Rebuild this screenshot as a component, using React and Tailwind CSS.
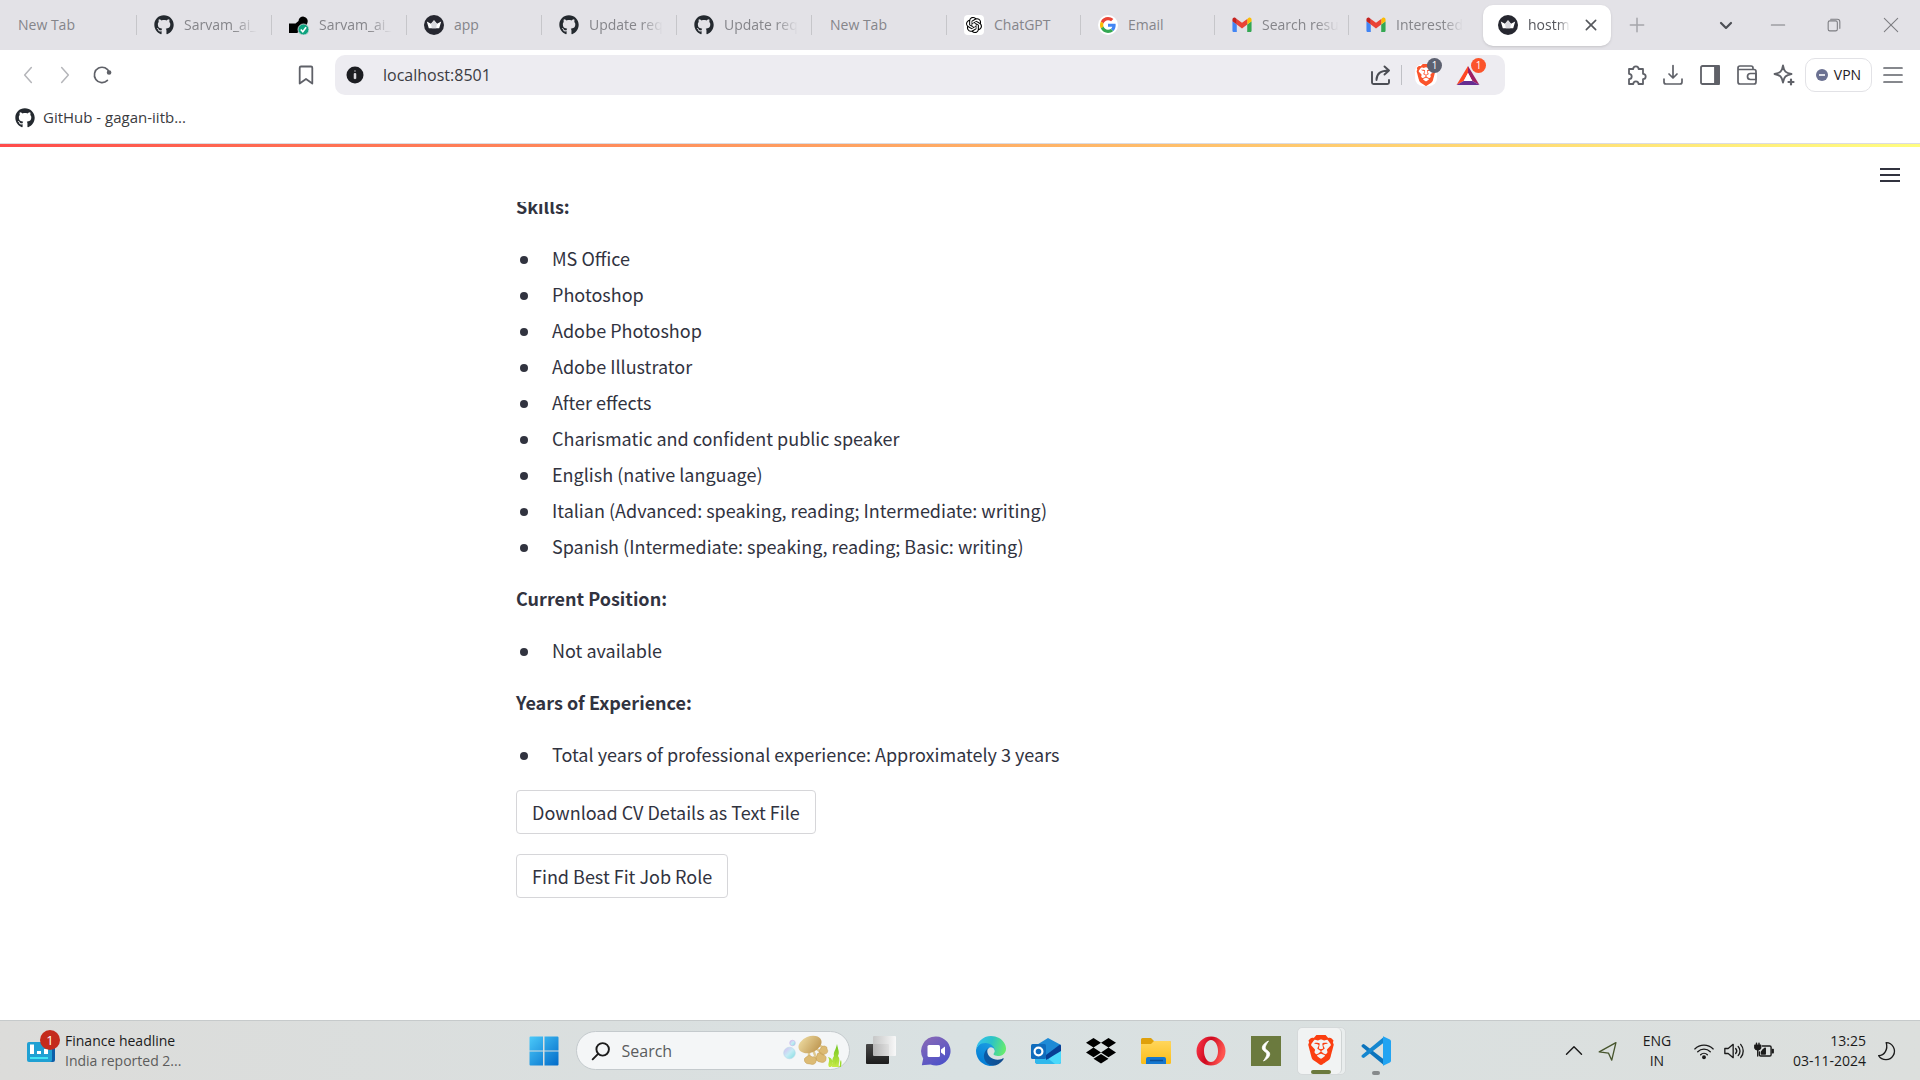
import React from "react";
import { SiBrave, SiOpenai } from "react-icons/si";
import { FaGithub } from "react-icons/fa";

const GitHub = () => <FaGithub className="size-5 shrink-0 text-[#24292f]" />;

const Crown = () => (
  <svg viewBox="0 0 20 20" className="size-5 shrink-0">
    <circle cx="10" cy="10" r="10" fill="#262730" />
    <path d="M2.8 6.6 7 8.7l3-3.4 3 3.4 4.2-2.1-2 6.7H4.8z" fill="#fff" />
    <path d="M7 8.7 10 5.3l3 3.4-.8 4.6H7.8z" fill="#d9d9de" />
  </svg>
);

const Colab = () => (
  <svg viewBox="0 0 20 20" className="size-5 shrink-0">
    <path d="M0 8.500h6.500L9.500 6a4.600 4.600 0 1 1 9 1.500L17 12 8 18H0z" fill="#000" />
    <circle cx="14.500" cy="14.500" r="5.500" fill="#0fa37f" stroke="#e3e2e7" strokeWidth="0.800" />
    <path d="m11.800 14.400 2 2.300 3.300-4.500" fill="none" stroke="#fff" strokeWidth="1.600" />
  </svg>
);

const ChatGpt = () => (
  <span className="flex size-5 shrink-0 items-center justify-center rounded bg-white">
    <SiOpenai className="size-4 text-black" />
  </span>
);

const Google = () => (
  <span className="flex size-5 shrink-0 items-center justify-center rounded-full bg-white">
    <svg viewBox="0 0 48 48" className="size-4">
      <path fill="#ea4335" d="M24 9.500c3.540 0 6.710 1.220 9.210 3.600l6.850-6.850C35.900 2.380 30.470 0 24 0 14.620 0 6.510 5.380 2.560 13.220l7.980 6.190C12.430 13.720 17.740 9.500 24 9.500z" />
      <path fill="#4285f4" d="M46.980 24.550c0-1.570-.15-3.090-.38-4.550H24v9.020h12.940c-.58 2.960-2.260 5.480-4.780 7.180l7.730 6c4.510-4.180 7.090-10.360 7.090-17.650z" />
      <path fill="#fbbc05" d="M10.530 28.590c-.48-1.450-.76-2.990-.76-4.590s.27-3.140.76-4.590l-7.980-6.190C.92 16.460 0 20.120 0 24s.92 7.540 2.560 10.780l7.970-6.190z" />
      <path fill="#34a853" d="M24 48c6.480 0 11.930-2.130 15.890-5.810l-7.730-6c-2.150 1.450-4.920 2.300-8.160 2.300-6.260 0-11.570-4.220-13.470-9.910l-7.980 6.190C6.510 42.620 14.620 48 24 48z" />
    </svg>
  </span>
);

const Gmail = () => (
  <svg viewBox="50 37 92 78" className="size-5 shrink-0">
    <path fill="#4285f4" d="M58 108h14V74L52 59v43c0 3.320 2.690 6 6 6" />
    <path fill="#34a853" d="M120 108h14c3.320 0 6-2.690 6-6V59l-20 15" />
    <path fill="#fbbc04" d="M120 48v26l20-15v-8c0-7.420-8.470-11.650-14.400-7.200" />
    <path fill="#ea4335" d="M72 74V48l24 18 24-18v26L96 92" />
    <path fill="#c5221f" d="M52 51v8l20 15V48l-5.600-4.200C60.470 39.350 52 43.580 52 51" />
  </svg>
);

const Line = ({ size = "size-6", children, w = 1.6 }) => (
  <svg viewBox="0 0 24 24" className={size} fill="none" stroke="currentColor" strokeWidth={w} strokeLinecap="round" strokeLinejoin="round">
    {children}
  </svg>
);

const tabs = [
  ["New Tab", null, "w-[137px]"],
  ["Sarvam_ai_", GitHub, "w-[135px]"],
  ["Sarvam_ai_", Colab, "w-[135px]"],
  ["app", Crown, "w-[135px]"],
  ["Update req", GitHub, "w-[135px]"],
  ["Update req", GitHub, "w-[135px]"],
  ["New Tab", null, "w-[135px]"],
  ["ChatGPT", ChatGpt, "w-[134px]"],
  ["Email", Google, "w-[134px]"],
  ["Search resu", Gmail, "w-[134px]"],
  ["Interested", Gmail, "w-[134px]"],
];

const fade = "whitespace-nowrap mask-r-from-70% mask-r-to-100%";

function TabStrip() {
  return (
    <div className="flex h-[50px] shrink-0 items-center bg-[#e3e2e7]">
      <div role="tablist" className="flex min-w-0 items-center">
        {tabs.map(([label, Icon, width], i) => (
          <button
            key={i}
            role="tab"
            className={
              "flex h-5 min-w-0 shrink items-center gap-[10px] border-r pr-2 text-left text-sm text-[#85858a] " +
              width +
              (Icon ? " pl-[17px] " : " pl-[18px] ") +
              (i === tabs.length - 1 ? "border-transparent" : "border-[#c6c6ca]")
            }
          >
            {Icon && <Icon />}
            <span className={label.length > 9 ? fade : "whitespace-nowrap"}>{label}</span>
          </button>
        ))}
        <div className="flex h-[41px] w-[128px] min-w-0 shrink items-center gap-[10px] rounded-[10px] bg-white pl-[15px] pr-3 shadow-sm">
          <Crown />
          <button role="tab" aria-selected="true" className={fade + " text-left text-sm text-[#55565c]"}>
            hostm
          </button>
          <button aria-label="Close tab" className="ml-auto text-[#55575c]">
            <Line size="size-4" w={2.4}>
              <path d="M5 5l14 14M19 5 5 19" />
            </Line>
          </button>
        </div>
      </div>
      <button aria-label="New tab" className="ml-4 text-[#a5a5aa]">
        <Line size="size-5" w={1.8}><path d="M12 4v16M4 12h16" /></Line>
      </button>
      <div className="ml-auto flex items-center text-[#7d7d82]">
        <button aria-label="Search tabs" className="flex w-12 justify-center text-[#4d4f55]">
          <Line size="size-5" w={2.6}><path d="m6 9.500 6 6 6-6" /></Line>
        </button>
        <button aria-label="Minimize" className="flex w-14 justify-center">
          <Line size="size-5" w={1.3}><path d="M4 12h16" /></Line>
        </button>
        <button aria-label="Restore" className="flex w-14 justify-center">
          <Line size="size-5" w={1.3}>
            <rect x="5" y="7" width="11" height="12" rx="2" />
            <path d="M8 5h8a3 3 0 0 1 3 3v8" />
          </Line>
        </button>
        <button aria-label="Close window" className="flex w-[58px] justify-center">
          <Line size="size-5" w={1.3}><path d="m4 4 16 16M20 4 4 20" /></Line>
        </button>
      </div>
    </div>
  );
}

const ToolButton = ({ label, className = "text-[#5f6168]", children }) => (
  <button aria-label={label} className={"flex h-10 w-[37px] shrink-0 items-center justify-center " + className}>
    {children}
  </button>
);

function Toolbar() {
  return (
    <div className="flex h-[50px] shrink-0 items-center bg-white">
      <div className="flex w-[335px] shrink-0 items-center pl-[9px] pr-[11px]">
        <ToolButton label="Back" className="text-[#b5b6ba]">
          <Line size="size-5" w={1.8}><path d="M16 3 8 12l8 9" /></Line>
        </ToolButton>
        <ToolButton label="Forward" className="text-[#b5b6ba]">
          <Line size="size-5" w={1.8}><path d="m8 3 8 9-8 9" /></Line>
        </ToolButton>
        <ToolButton label="Reload">
          <Line size="size-5" w={2}>
            <path d="M18.500 18.500A9.200 9.200 0 1 1 20.800 9" />
            <circle cx="20.500" cy="9" r="1.800" fill="currentColor" />
          </Line>
        </ToolButton>
        <span className="flex-1" />
        <ToolButton label="Bookmark this page">
          <Line w={1.8}><path d="M7 3.500h10a1.300 1.300 0 0 1 1.300 1.300v15.700L12 16l-6.300 4.500V4.800A1.300 1.300 0 0 1 7 3.500z" /></Line>
        </ToolButton>
      </div>
      <div className="flex h-10 min-w-0 flex-1 items-center rounded-[10px] bg-[#edecf1] pl-[11px] pr-[19px]">
        <svg viewBox="0 0 18 18" className="size-[18px] shrink-0">
          <circle cx="9" cy="9" r="8.500" fill="#1c1d22" />
          <path d="M8.200 5h1.600M8.200 7.600v5h1.600v-5z" stroke="#edecf1" strokeWidth="0.800" fill="#edecf1" />
        </svg>
        <input aria-label="Address" defaultValue="localhost:8501" className="ml-[19px] min-w-0 flex-1 bg-transparent text-base text-[#3b3b42] outline-none" />
        <button aria-label="Share" className="text-[#4b4d54]">
          <Line w={1.9}>
            <path d="M3 9v10.500a1.500 1.500 0 0 0 1.500 1.500h14a1.500 1.500 0 0 0 1.500-1.500V17M7.500 17c0-6 4-9.500 12.500-9.500M15.500 3.500l4.500 4-4.500 4" />
          </Line>
        </button>
        <span className="mx-2 h-5 w-px bg-[#bfc0c5]" />
        <button aria-label="Brave Shields" className="relative flex size-8 items-center justify-center">
          <SiBrave className="size-[22px] rounded-lg bg-white text-[#fb542b]" />
          <span className="absolute -top-px right-0 flex size-[15px] items-center justify-center rounded-full bg-[#5d6170] text-[10px] text-white">1</span>
        </button>
        <button aria-label="Brave Rewards" className="relative ml-2 flex h-8 w-9 items-center justify-center">
          <svg viewBox="0 0 24 22" className="h-[21px] w-6">
            <path d="M12 1 0 21l7.500-4.300L12 8.500z" fill="#ff4724" />
            <path d="M12 1l12 20-7.500-4.300L12 8.500z" fill="#9e1f63" />
            <path d="M0 21h24l-7.500-4.300h-9z" fill="#662d91" />
            <path d="M12 8.500 7.500 16.700h9z" fill="#fff" />
          </svg>
          <span className="absolute -top-px right-0 flex size-[15px] items-center justify-center rounded-full bg-[#fb542b] text-[10px] text-white">1</span>
        </button>
      </div>
      <div className="ml-auto flex w-[415px] shrink-0 items-center justify-end pr-[9px]">
        <ToolButton label="Extensions">
          <Line w={1.8}><path d="M5 6h4.200a2.700 2.700 0 0 1 5.400 0H19v4.800a2.700 2.700 0 0 1 0 5.400V21h-4.500a2.600 2.600 0 0 0-5.200 0H5v-4.800a2.700 2.700 0 0 0 0-5.400z" /></Line>
        </ToolButton>
        <ToolButton label="Downloads">
          <Line w={1.7}><path d="M12 2.500v12M8 11l4 4 4-4M3 16v3a2 2 0 0 0 2 2h14a2 2 0 0 0 2-2v-3" /></Line>
        </ToolButton>
        <ToolButton label="Sidebar">
          <Line w={1.8}>
            <rect x="3" y="3" width="18" height="18" rx="1.500" />
            <path d="M17 3h4v18h-4z" fill="currentColor" />
          </Line>
        </ToolButton>
        <ToolButton label="Wallet">
          <Line w={1.7}>
            <path d="M18 6.500V5a2 2 0 0 0-2-2H5a2 2 0 0 0-2 2v14a2 2 0 0 0 2 2h14a2 2 0 0 0 2-2V8.500a2 2 0 0 0-2-2H3.500" />
            <path d="M21 10.500h-5.500a3 3 0 0 0 0 6H21z" />
          </Line>
        </ToolButton>
        <ToolButton label="Leo AI">
          <Line w={1.8}>
            <path d="M11 2.500c1 6 2.700 7.400 8.500 8.500-5.800 1.100-7.500 2.700-8.500 8.500-1-5.800-2.700-7.400-8.500-8.500 5.800-1.100 7.500-2.500 8.500-8.500z" />
            <path d="M19 16.500v5M16.500 19h5" strokeWidth="2.200" />
          </Line>
        </ToolButton>
        <button className="ml-[3px] mr-[2px] flex h-[34px] w-[67px] items-center justify-center gap-[6px] rounded-[10px] border border-[#e2e2e6] text-sm text-[#1f2024]">
          <svg viewBox="0 0 12 12" className="size-3">
            <circle cx="6" cy="6" r="6" fill="#6b7191" />
            <path d="M3 6h6" stroke="#fff" strokeWidth="1.600" />
          </svg>
          VPN
        </button>
        <ToolButton label="Menu">
          <Line w={1.7}><path d="M3 5h18M3 12h18M3 19h18" /></Line>
        </ToolButton>
      </div>
    </div>
  );
}

const skills = [
  "MS Office",
  "Photoshop",
  "Adobe Photoshop",
  "Adobe Illustrator",
  "After effects",
  "Charismatic and confident public speaker",
  "English (native language)",
  "Italian (Advanced: speaking, reading; Intermediate: writing)",
  "Spanish (Intermediate: speaking, reading; Basic: writing)",
];

const Section = ({ title, items }) => (
  <section className="flex flex-col gap-5">
    <h2 className="font-bold leading-7">{title}</h2>
    <ul>
      {items.map((t) => (
        <li key={t} className="flex items-center gap-6 py-1 pl-1 leading-7">
          <span className="mt-[3px] size-2 rounded-full bg-[#31333f]" />
          {t}
        </li>
      ))}
    </ul>
  </section>
);

const AppButton = ({ children }) => (
  <button className="h-11 rounded-[4px] border border-[#d6d6d9] bg-white px-[15px]">{children}</button>
);

function Page() {
  return (
    <div className="flex min-h-0 flex-1 flex-col border-t border-[#dcdce2] bg-white">
      <div className="h-[3px] shrink-0 bg-linear-to-r from-[#ff4b4b] to-[#fffd80]" />
      <header className="flex h-[55px] shrink-0 items-center justify-end pr-5">
        <button aria-label="Main menu" className="flex w-5 flex-col gap-1">
          <span className="h-[2px] bg-[#31333f]" />
          <span className="h-[2px] bg-[#31333f]" />
          <span className="h-[2px] bg-[#31333f]" />
        </button>
      </header>
      <main className="min-h-0 flex-1 overflow-hidden">
        <div className="mx-auto -mt-[10px] flex max-w-[888px] flex-col gap-[18px] font-['Noto_Sans_CJK_SC','Noto_Sans',sans-serif] text-[18px] text-[#31333f]">
          <div className="flex flex-col gap-5">
            <Section title="Skills:" items={skills} />
            <Section title="Current Position:" items={["Not available"]} />
            <Section title="Years of Experience:" items={["Total years of professional experience: Approximately 3 years"]} />
          </div>
          <div className="flex flex-col items-start gap-5">
            <AppButton>Download CV Details as Text File</AppButton>
            <AppButton>Find Best Fit Job Role</AppButton>
          </div>
        </div>
      </main>
    </div>
  );
}

const Svg = ({ children, box = "0 0 30 30" }) => (
  <svg viewBox={box} className="size-[30px]">{children}</svg>
);

function AppIcons() {
  const apps = [
    ["Task view", <Svg>
      <defs>
        <linearGradient id="tvd" x2="0" y2="1"><stop stopColor="#484848" /><stop offset="1" stopColor="#1c1c1c" /></linearGradient>
        <linearGradient id="tvl"><stop stopColor="#c4c4c4" stopOpacity="0.900" /><stop offset="1" stopColor="#fafafa" stopOpacity="0.950" /></linearGradient>
      </defs>
      <rect x="0" y="8" width="23" height="20" rx="1" fill="url(#tvd)" />
      <rect x="7" y="0" width="23" height="20" rx="1" fill="url(#tvl)" />
    </Svg>],
    ["Chat", <Svg>
      <defs><linearGradient id="tm" x2="0.600" y2="1"><stop stopColor="#8d6bb5" /><stop offset="1" stopColor="#4f52c8" /></linearGradient></defs>
      <path d="M15 0.500a14.500 14.500 0 1 1-5.500 27.900L0.800 29.300l1.400-6.900A14.500 14.500 0 0 1 15 .5z" fill="url(#tm)" />
      <rect x="6.500" y="9" width="12.500" height="12" rx="1.500" fill="#fff" />
      <path d="m20 13.500 4-3v9l-4-3z" fill="#fff" />
    </Svg>],
    ["Edge", <Svg box="0 0 256 256">
      <defs>
        <linearGradient id="e1" x1="0.200" x2="1"><stop stopColor="#0c59a4" /><stop offset="1" stopColor="#114a8b" /></linearGradient>
        <linearGradient id="e2" x1="0.600" y1="0" x2="0.200" y2="1"><stop stopColor="#1b9de2" /><stop offset="1" stopColor="#0078d4" /></linearGradient>
        <linearGradient id="e3" x1="0" y1="0.300" x2="1" y2="0.500"><stop stopColor="#35c1f1" /><stop offset="0.500" stopColor="#2cc3c6" /><stop offset="1" stopColor="#66eb6e" /></linearGradient>
      </defs>
      <g transform="translate(-4.630 -4.920)">
        <path fill="url(#e1)" d="M235.680,195.460a93.730,93.730,0,0,1-10.540,4.710,101.870,101.870,0,0,1-35.900,6.460c-47.320,0-88.540-32.550-88.540-74.320A31.480,31.480,0,0,1,117.130,105c-42.800,1.800-53.800,46.400-53.800,72.530,0,73.880,68.090,81.370,82.760,81.370,7.910,0,19.840-2.300,27-4.560l1.310-.44A128.340,128.340,0,0,0,241,201.100a4,4,0,0,0-5.320-5.640Z" />
        <path fill="url(#e2)" d="M110.340,246.340A79.200,79.200,0,0,1,87.600,225,80.720,80.720,0,0,1,117.130,105c3.120-1.470,8.450-4.130,15.540-4a32.350,32.350,0,0,1,25.690,13,31.880,31.880,0,0,1,6.360,18.660c0-.21,24.460-79.600-80-79.600-43.900,0-80,41.660-80,78.210a130.150,130.150,0,0,0,12.110,56,128,128,0,0,0,156.380,67.110,75.550,75.550,0,0,1-62.780-8Z" />
      </g>
      <path fill="url(#e3)" d="M152.330,148.860c-.81,1.050-3.300,2.500-3.300,5.660,0,2.610,1.700,5.120,4.720,7.230,14.380,10,41.490,8.680,41.560,8.680a59.560,59.560,0,0,0,30.270-8.350A61.380,61.380,0,0,0,256,109.200c.26-22.410-8-37.310-11.340-43.910C223.460,23.840,177.720,0,128,0A128,128,0,0,0,0,126.200c.48-36.540,36.800-66,80-66,3.500,0,23.460.34,42,10.070,16.340,8.580,24.900,18.940,30.850,29.210,6.180,10.670,7.280,24.150,7.280,29.520S157.370,142.330,152.330,148.860Z" />
    </Svg>],
    ["Outlook", <Svg>
      <path d="M4 10 17 2l13 7v17a2 2 0 0 1-2 2H7a3 3 0 0 1-3-3z" fill="#1e8ad6" />
      <path d="M30 12v14a2 2 0 0 1-2 2H12z" fill="#4bd9fb" />
      <path d="M4 21v4a3 3 0 0 0 3 3h17l-9-7z" fill="#2fb8ec" />
      <path d="M15 19 29 8.500l1 1V15l-15 9z" fill="#083f94" />
      <rect x="0" y="8" width="15" height="15" rx="1.500" fill="#0f6cbd" />
      <circle cx="7.500" cy="15.500" r="3.900" fill="none" stroke="#fff" strokeWidth="2.200" />
    </Svg>],
    ["Dropbox", <Svg>
      <path d="m7.500 2 7.500 4.800-7.500 4.800L0 6.800zM22.500 2 30 6.800l-7.500 4.800L15 6.800zM0 16.400l7.500-4.800 7.500 4.800-7.500 4.800zM22.500 11.600l7.500 4.800-7.500 4.800-7.500-4.800zM7.500 22.700l7.500-4.800 7.500 4.800-7.500 4.800z" fill="#000" />
    </Svg>],
    ["File Explorer", <Svg>
      <defs><linearGradient id="fe" x2="0" y2="1"><stop stopColor="#ffd65c" /><stop offset="1" stopColor="#fbbd18" /></linearGradient></defs>
      <path d="M0 3.500A1.500 1.500 0 0 1 1.500 2H10l3 3h15a2 2 0 0 1 2 2v4H0z" fill="#dfa00b" />
      <path d="M0 8h10l3-3h15.500A1.500 1.500 0 0 1 30 6.500v20a1.500 1.500 0 0 1-1.500 1.500h-27A1.500 1.500 0 0 1 0 26.500z" fill="url(#fe)" />
      <path d="M5 28v-5a2 2 0 0 1 2-2h16a2 2 0 0 1 2 2v5z" fill="#1477cf" />
      <path d="M9 24.500h13" stroke="#0a4f96" strokeWidth="1.500" />
    </Svg>],
    ["Opera", <Svg>
      <defs><linearGradient id="op" x2="1" y2="0.300"><stop stopColor="#ff3b4c" /><stop offset="0.500" stopColor="#cf0a20" /><stop offset="1" stopColor="#ff5550" /></linearGradient></defs>
      <path fillRule="evenodd" d="M15 0.500a14.500 14.500 0 1 1 0 29 14.500 14.500 0 0 1 0-29zM15 4c-4 0-7 5-7 11s3 11 7 11 7-5 7-11-3-11-7-11z" fill="url(#op)" />
    </Svg>],
    ["Stream app", <Svg>
      <path d="M0 0h30v30H0z" fill="#6b7a3e" />
      <path d="M17.500 5c-4 2-7 5-6 8 .5 1.500 2.500 2.500 4 4 1 2-1 5-3 8 4-2 7-5 6-8-.5-1.500-2.500-2.500-4-4-1-2 1-5 3-8z" fill="#fff" stroke="#fff" strokeLinejoin="round" strokeWidth="0.800" />
    </Svg>],
  ];
  return apps.map(([name, icon]) => (
    <button key={name} aria-label={name} className="flex w-[55px] items-center justify-center">{icon}</button>
  ));
}

const SearchArt = () => (
  <svg viewBox="0 0 60 34" className="h-[34px] w-[60px] shrink-0">
    <defs>
      <linearGradient id="bb" x2="1" y2="1"><stop stopColor="#d9b8f0" /><stop offset="0.500" stopColor="#c5ecf5" /><stop offset="1" stopColor="#7fdde0" /></linearGradient>
      <linearGradient id="cp" x2="1" y2="1"><stop stopColor="#f0dfa6" /><stop offset="1" stopColor="#b98f48" /></linearGradient>
      <linearGradient id="wd" x2="0" y2="1"><stop stopColor="#6cc41c" /><stop offset="1" stopColor="#c7ea46" /></linearGradient>
    </defs>
    <circle cx="7.500" cy="19" r="5.800" fill="url(#bb)" stroke="#b5d9ea" strokeWidth="0.600" />
    <circle cx="10.500" cy="9" r="2.800" fill="url(#bb)" stroke="#c9b5ea" strokeWidth="0.600" />
    <path d="M27 17v8M31 16l4 10M35 15l6 6M37 11l6 4" stroke="#e0c98f" strokeWidth="2.400" strokeLinecap="round" />
    <path d="M25 22.500a3 2.500 0 0 1 5 .5 3 3 0 0 1 4 4 4 3 0 0 1-6 3 5 4 0 0 1-3-7.500zM35 21.500a3 2.500 0 0 1 6-.5 3 3 0 0 1 3 4 4 3 0 0 1-6 3 4 4 0 0 1-3-6.500zM39 14a3 2.500 0 0 1 6 1 3 3 0 0 1-2 5 3 3 0 0 1-4-6z" fill="#dcbb74" stroke="#c39c55" strokeWidth="0.500" />
    <ellipse cx="28" cy="10.500" rx="12" ry="8" transform="rotate(-22 28 10.500)" fill="url(#cp)" />
    <path d="M47 33c-2-4 2-6-1-10 4 1 5 4 4 6 1 2 0 3-1 4zM50 33c1-4-1-7 2-11-1-4 2-6 3-12 1 6 3 8 1 12 3 4 0 7 1 11z" fill="url(#wd)" />
    <path d="M53 33c0-3 2-5 1-8M57 33c2-2 0-4 2-7 1 3 0 5 0 7z" fill="#9bd92c" />
  </svg>
);

function Taskbar() {
  return (
    <footer className="grid h-[60px] shrink-0 grid-cols-[1fr_auto_1fr] items-center border-t border-[#c6cacb] bg-linear-to-r from-[#dcdcda] via-[#d9e1e2] to-[#dcdfdd] text-sm leading-5 text-[#1b1b1b]">
      <button className="flex items-center gap-[5px] pl-[27px] text-left">
        <svg viewBox="0 0 33 33" className="mb-2 size-[33px]" aria-hidden="true">
          <path d="M24 13h4v17a2 2 0 0 1-2 2h-3z" fill="#0d5ea8" />
          <rect x="0" y="12" width="25" height="20" rx="2" fill="#1fa0d3" />
          <path d="M3 14.500h4V24H3zM10 21h4v3h-4zM17 19h4v5h-4z" fill="#fff" />
          <path d="M3 28h18" stroke="#3fe3f5" strokeWidth="2" />
          <circle cx="23" cy="10" r="10" fill="#c42b1c" />
          <text x="23" y="15" textAnchor="middle" fontSize="13" fill="#fff">1</text>
        </svg>
        <span className="flex flex-col">
          <span>Finance headline</span>
          <span className="text-[#5c5c5c]">India reported 2...</span>
        </span>
      </button>
      <div className="flex h-full items-center">
        <button aria-label="Start" className="flex w-[55px] justify-center">
          <Svg>
            <defs><linearGradient id="wn" gradientUnits="userSpaceOnUse" x1="0" y1="0" x2="30" y2="30"><stop stopColor="#4ccbfa" /><stop offset="1" stopColor="#0069c8" /></linearGradient></defs>
            <path d="M1.500 0.500H14v14H.5v-13a1 1 0 0 1 1-1zM15.500.5h13a1 1 0 0 1 1 1v13h-14zM.5 15.500H14v14H1.500a1 1 0 0 1-1-1zM15.500 15.500h14v13a1 1 0 0 1-1 1h-13z" fill="url(#wn)" />
          </Svg>
        </button>
        <div className="w-[282px] px-1">
          <label className="flex h-[39px] items-center rounded-full border border-[#c4cacd] bg-[#f4f6f7] pl-[14px] pr-[7px]">
            <Line size="size-5" w={2.3}>
              <circle cx="14" cy="10" r="7.500" />
              <path d="m8.500 15.500-6.500 6.500" />
            </Line>
            <input aria-label="Search" placeholder="Search" className="ml-[11px] min-w-0 flex-1 bg-transparent text-base outline-none placeholder:text-[#5a5c5e]" />
            <SearchArt />
          </label>
        </div>
        <AppIcons />
        <button aria-label="Brave" className="flex h-12 w-[55px] items-center pl-[3px]">
          <span className="flex h-12 w-[49px] rounded-[5px] border border-[#d5d9da] bg-[#e9eded]">
            <span className="flex w-[44px] flex-col items-center justify-end rounded-[5px] border-r border-[#cfd4d4] bg-[#f1f3f3] pl-1">
              <SiBrave className="mb-[5px] size-[30px] text-[#fb3e10]" />
              <span className="h-1 w-5 rounded-full bg-[#6b7a3e]" />
            </span>
          </span>
        </button>
        <button aria-label="Visual Studio Code" className="flex h-12 w-[55px] flex-col items-center justify-end">
          <span className="mb-[5px]">
            <Svg>
              <path d="M1.500 8.500a1.500 1.500 0 0 1 2 0L23 23.500v5.700L1 11a1.500 1.500 0 0 1 .5-2.500z" fill="#0b74bd" />
              <path d="M1.500 21.500a1.500 1.500 0 0 0 2 0L23 6.500V.8L1 19a1.500 1.500 0 0 0 .5 2.500z" fill="#1486cf" />
              <path d="M22 .2 28.900 3.500a2 2 0 0 1 1.100 1.800v19.400a2 2 0 0 1-1.100 1.800L22 29.800z" fill="#22a4f2" />
            </Svg>
          </span>
          <span className="h-1 w-2 rounded-full bg-[#868a8b]" />
        </button>
      </div>
      <div className="flex items-center justify-end pr-[21px]">
        <button aria-label="Hidden icons" className="mr-1 flex w-[30px] justify-center"><Line size="size-5" w={1.7}><path d="m3 16 9-9 9 9" /></Line></button>
        <button aria-label="Location" className="mr-[14px] flex w-[30px] justify-center text-[#47552d]"><Line size="size-5" w={1.6}><path d="M21.500 2 1.500 13l11 1.500L16.500 23z" /></Line></button>
        <button className="mr-3 w-10 text-center">ENG<br />IN</button>
        <button aria-label="Wi-Fi" className="flex w-[30px] justify-center"><Line size="size-5" w={1.6}><path d="M1 9.500a15.500 15.500 0 0 1 22 0M4.500 13a10.500 10.500 0 0 1 15 0M8 16.500a5.700 5.700 0 0 1 8 0" /><circle cx="12" cy="19.500" r="1.500" fill="currentColor" /></Line></button>
        <button aria-label="Volume" className="flex w-[30px] justify-center"><Line size="size-5" w={1.6}><path d="M1 9h4l6-5v16l-6-5H1zM14 9a4.500 4.500 0 0 1 0 6M17 6.500a8 8 0 0 1 0 11M20 4a12 12 0 0 1 0 16" /></Line></button>
        <button aria-label="Battery" className="mr-[14px] flex w-[30px] justify-center">
          <Line size="size-5" w={1.7}>
            <path d="M10 6h9a1.500 1.500 0 0 1 1.500 1.500v9A1.500 1.500 0 0 1 19 18H8a1.500 1.500 0 0 1-1.500-1.500V13" />
            <path d="M9 15.500h4.500v-7l-3 2.500-1.500 2zM22 10h1v4h-1zM1 5h7v3.500a3 3 0 0 1-3 2H4a3 3 0 0 1-3-2z" fill="currentColor" />
            <path d="M3 2.500V5M6 2.500V5M4.500 10v8" />
          </Line>
        </button>
        <button className="mr-[9px] text-right">13:25<br />03-11-2024</button>
        <button aria-label="Do not disturb" className="flex w-6 justify-center"><Line size="size-5" w={1.6}><path d="M11 2a10.200 10.200 0 1 1-9 15.500C9 17.500 13.500 10 11 2z" /></Line></button>
      </div>
    </footer>
  );
}

export default function App() {
  return (
    <div className="flex h-screen flex-col overflow-hidden bg-white font-['Open_Sans','Noto_Sans',sans-serif]">
      <TabStrip />
      <Toolbar />
      <nav aria-label="Bookmarks" className="flex h-[43px] shrink-0 items-center px-[15px] pb-2">
        <a href="#github" className="flex items-center gap-2 text-[15px] text-[#3a3b40]">
          <GitHub />
          GitHub - gagan-iitb...
        </a>
      </nav>
      <Page />
      <Taskbar />
    </div>
  );
}
